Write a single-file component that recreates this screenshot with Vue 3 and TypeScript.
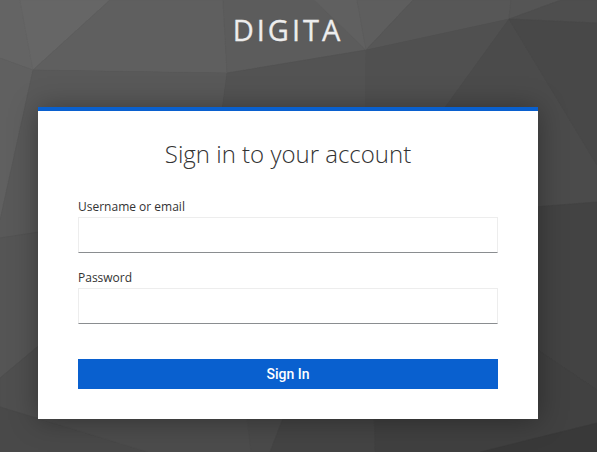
<script setup lang="ts">
import { ref } from 'vue'

interface Facet {
  points: string
  fill: string
}

const username = ref('')
const password = ref('')

const facets: Facet[] = [
  { points: '0,0 20,0 33,70 0,58', fill: '#646464' },
  { points: '20,0 110,0 33,70', fill: '#666666' },
  { points: '110,0 223,0 227,73 33,70', fill: '#5f5f5f' },
  { points: '223,0 314,0 366,50 227,73', fill: '#5c5c5c' },
  { points: '314,0 357,0 366,50', fill: '#606060' },
  { points: '357,0 413,0 366,50', fill: '#5e5e5e' },
  { points: '413,0 511,0 509,19 366,50', fill: '#575757' },
  { points: '511,0 561,0 509,19', fill: '#555555' },
  { points: '561,0 597,0 597,23 509,19', fill: '#4e4e4e' },
  { points: '0,58 33,70 0,220', fill: '#606060' },
  { points: '33,70 227,73 210,200 38,232 0,238 0,220', fill: '#595959' },
  { points: '227,73 366,50 365,200 210,200', fill: '#535353' },
  { points: '366,50 509,19 378,200 365,200', fill: '#505050' },
  { points: '509,19 597,165 597,202 538,207 378,200', fill: '#4b4b4b' },
  { points: '509,19 597,23 597,165', fill: '#484848' },
  { points: '0,238 60,229 60,328 0,378', fill: '#555555' },
  { points: '0,378 60,328 60,425 0,407', fill: '#4f4f4f' },
  { points: '0,407 148,452 0,452', fill: '#494949' },
  { points: '38,400 247,400 251,452 148,452 38,418', fill: '#4c4c4c' },
  { points: '245,400 290,400 270,452 251,452', fill: '#4a4a4a' },
  { points: '290,400 374,400 375,452 270,452', fill: '#444444' },
  { points: '374,400 560,400 560,432 480,452 375,452', fill: '#404040' },
  { points: '520,208 597,202 597,390 520,338', fill: '#434343' },
  { points: '520,338 597,390 597,423 520,442', fill: '#414141' },
  { points: '597,423 597,452 480,452', fill: '#393939' },
]
</script>

<template>
  <div class="page">
    <svg class="backdrop" viewBox="0 0 597 452" preserveAspectRatio="none" aria-hidden="true">
      <polygon v-for="facet in facets" :key="facet.points" :points="facet.points" :fill="facet.fill" :stroke="facet.fill" stroke-width=".5" />
    </svg>
    <div class="login">
      <header class="brand">DIGITA</header>
      <main class="card">
        <h1>Sign in to your account</h1>
        <form @submit.prevent>
          <div class="field">
            <label for="username">Username or email</label>
            <input id="username" v-model="username" type="text" autocomplete="username" />
          </div>
          <div class="field">
            <label for="password">Password</label>
            <input id="password" v-model="password" type="password" autocomplete="current-password" />
          </div>
          <button type="submit">Sign In</button>
        </form>
      </main>
    </div>
  </div>
</template>

<style>
body {
  margin: 0;
  overflow: hidden;
}
</style>

<style scoped>
.page {
  display: grid;
  width: 597px;
  height: 452px;
  overflow: hidden;
  background: #4a4a4a;
  font-family: "Open Sans", "Noto Sans", sans-serif;
}

.backdrop,
.login {
  grid-area: 1 / 1;
}

.backdrop {
  width: 597px;
  height: 452px;
}

.login {
  z-index: 1;
  width: 500px;
  margin-left: 38px;
}

.brand {
  height: 107px;
  padding-top: 10px;
  box-sizing: border-box;
  color: #ededed;
  font-size: 29px;
  line-height: 40px;
  letter-spacing: 3px;
  text-align: center;
  -webkit-text-stroke: .3px #ededed;
}

.card {
  box-sizing: border-box;
  height: 312px;
  padding: 26px 40px 30px;
  border-top: 4px solid #0960cf;
  background: #fff;
  box-shadow: 0 1px 26px rgba(3, 3, 3, .35);
}

h1 {
  margin: 0 0 27px;
  color: #333;
  font-size: 24px;
  font-weight: 300;
  line-height: 34px;
  text-align: center;
}

.field {
  display: flex;
  flex-direction: column;
  height: 71px;
}

label {
  height: 19px;
  color: #333;
  font-size: 12px;
  line-height: 18px;
}

input {
  box-sizing: border-box;
  width: 100%;
  height: 36px;
  padding: 6px 8px;
  border: 1px solid #ededed;
  border-bottom-color: #8a8d90;
  border-radius: 0;
  outline: 0;
  background: #fff;
  font: inherit;
}

button {
  display: block;
  width: 100%;
  height: 30px;
  margin-top: 19px;
  padding: 0;
  border: 0;
  background: #0960cf;
  color: #fff;
  font-family: Roboto, sans-serif;
  font-size: 14px;
  font-weight: 500;
  line-height: 30px;
}
</style>
